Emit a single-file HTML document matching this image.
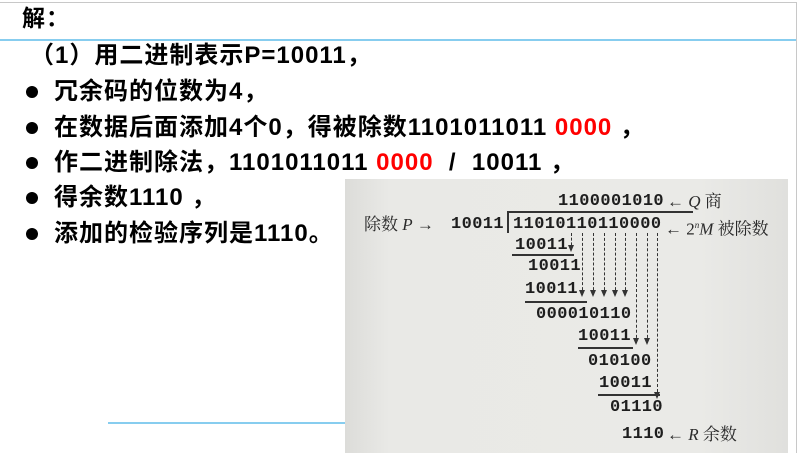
<!DOCTYPE html>
<html><head><meta charset="utf-8"><style>
body{margin:0;width:798px;height:453px;background:#fff;position:relative;overflow:hidden;font-family:"Liberation Sans","Noto Sans CJK SC",sans-serif;}
.a{position:absolute;white-space:nowrap;}
.t{font-weight:bold;font-size:24px;letter-spacing:1px;color:#000;line-height:24px;}
.dot{position:absolute;width:12px;height:12px;border-radius:50%;background:#000;left:26px;}
.m{font-family:"Liberation Mono",monospace;font-weight:bold;font-size:17px;letter-spacing:0.4px;color:#1e1e1e;line-height:16px;}
.s{font-family:"Liberation Serif","Noto Serif CJK SC",serif;font-size:17px;color:#2a2a2a;line-height:16px;}
.ln{position:absolute;background:#333;height:1.5px;}
.d{position:absolute;width:0;border-left:1px dashed #333;}
.d:after{content:"";position:absolute;left:-4px;bottom:-2px;border-left:3.5px solid transparent;border-right:3.5px solid transparent;border-top:7px solid #333;}
</style></head><body>
<div class="a" style="left:0;top:2px;width:796px;height:1px;background:#c8c8c8"></div>
<div class="a" style="left:796px;top:2px;width:1px;height:451px;background:#c8c8c8"></div>
<div class="a" style="left:0;top:39px;width:796px;height:2px;background:#87cdef"></div>
<div class="a" style="left:108px;top:422px;width:240px;height:2px;background:#87cdef"></div>
<div class="a t" style="left:22px;top:6px;font-size:23px">解：</div>
<div class="a t" style="left:30px;top:44px">（1）用二进制表示P=10011，</div>
<div class="dot" style="top:86px"></div><div class="a t" style="left:54px;top:80px">冗余码的位数为4，</div>
<div class="dot" style="top:122px"></div><div class="a t" style="left:54px;top:116px">在数据后面添加4个0，得被除数1101011011 <span style="color:#f00">0000</span> ，</div>
<div class="dot" style="top:157px"></div><div class="a t" style="left:54px;top:151px">作二进制除法，1101011011 <span style="color:#f00">0000</span> &nbsp;/ &nbsp;10011 ，</div>
<div class="dot" style="top:192px"></div><div class="a t" style="left:54px;top:186px">得余数1110 ，</div>
<div class="dot" style="top:228px"></div><div class="a t" style="left:54px;top:222px">添加的检验序列是1110。</div>

<div class="a" style="left:345px;top:179px;width:443px;height:274px;background:linear-gradient(90deg,#dcdcd9,#e9e9e6 10%,#eaeae7 80%,#e0e0dd)"></div>
<div class="a m" style="left:558px;top:194px">1100001010</div>
<div class="a s" style="left:667px;top:194px">← <i>Q</i> 商</div>
<div class="a s" style="left:364px;top:217px">除数 <i>P</i> →</div>
<div class="a m" style="left:451px;top:217px">10011</div>
<div class="ln" style="left:507px;top:211px;width:186px"></div>
<div class="ln" style="left:507px;top:211px;width:1.5px;height:22px"></div>
<div class="a m" style="left:513px;top:217px">11010110110000</div>
<div class="a s" style="left:665px;top:217px">← 2<sup style="font-size:9px"><i>n</i></sup><i>M</i> 被除数</div>
<div class="a m" style="left:515px;top:238px">10011</div>
<div class="ln" style="left:512px;top:254px;width:62px"></div>
<div class="a m" style="left:528px;top:259px">10011</div>
<div class="a m" style="left:525px;top:282px">10011</div>
<div class="ln" style="left:525px;top:301px;width:62px"></div>
<div class="a m" style="left:536px;top:307px">000010110</div>
<div class="a m" style="left:578px;top:329px">10011</div>
<div class="ln" style="left:578px;top:347px;width:55px"></div>
<div class="a m" style="left:588px;top:354px">010100</div>
<div class="a m" style="left:599px;top:376px">10011</div>
<div class="ln" style="left:598px;top:394px;width:62px"></div>
<div class="a m" style="left:610px;top:400px">01110</div>
<div class="a m" style="left:622px;top:427px">1110</div>
<div class="a s" style="left:667px;top:427px">← <i>R</i> 余数</div>
<div class="d" style="left:571px;top:233px;height:17px"></div>
<div class="d" style="left:582px;top:233px;height:62px"></div>
<div class="d" style="left:593px;top:233px;height:62px"></div>
<div class="d" style="left:604px;top:233px;height:62px"></div>
<div class="d" style="left:615px;top:233px;height:62px"></div>
<div class="d" style="left:625px;top:233px;height:62px"></div>
<div class="d" style="left:636px;top:233px;height:110px"></div>
<div class="d" style="left:647px;top:233px;height:110px"></div>
<div class="d" style="left:657px;top:233px;height:164px"></div>
</body></html>
